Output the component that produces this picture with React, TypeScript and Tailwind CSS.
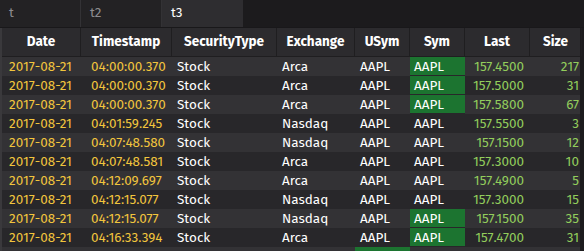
const cols = [
  { name: "Date", w: "w-[79px]" },
  { name: "Timestamp", w: "w-[91px]" },
  { name: "SecurityType", w: "w-[105px]" },
  { name: "Exchange", w: "w-[78px]" },
  { name: "USym", w: "w-[55px]" },
  { name: "Sym", w: "w-[55px]" },
  { name: "Last", w: "w-[65px]" },
  { name: "Size", w: "w-[52px]" },
];

const rows = [
  ["04:00:00.370", "Arca", true, "157.4500", "217"],
  ["04:00:00.370", "Arca", true, "157.5000", "31"],
  ["04:00:00.370", "Arca", true, "157.5800", "67"],
  ["04:01:59.245", "Nasdaq", false, "157.5500", "3"],
  ["04:07:48.580", "Nasdaq", false, "157.1500", "12"],
  ["04:07:48.581", "Arca", false, "157.3000", "10"],
  ["04:12:09.697", "Arca", false, "157.4900", "5"],
  ["04:12:15.077", "Nasdaq", false, "157.3000", "15"],
  ["04:12:15.077", "Nasdaq", true, "157.1500", "35"],
  ["04:16:33.394", "Arca", true, "157.4700", "31"],
] as const;

const App = () => {
  return (
    <div
      className="w-[584px] h-[251px] overflow-hidden bg-[#1c1b1d] text-[13.5px] text-white"
      style={{ fontFamily: '"Fira Sans", "Noto Sans", sans-serif' }}
    >
      <div className="flex h-[28px] border-b border-[#19181a]">
        <div className="w-[81px] pl-[9px] flex items-center text-[#8d8c8f] bg-[#232224] border-r border-[#333235]">
          t
        </div>
        <div className="w-[81px] pl-[9px] flex items-center text-[#8d8c8f] bg-[#232224] border-r border-[#333235]">
          t2
        </div>
        <div className="w-[81px] pl-[9px] flex items-center text-white bg-[#2e2d30]">
          t3
        </div>
      </div>
      <div className="w-[580px] border-l-2 border-[#3a393c]">
        <div className="flex h-[29px] bg-[#2c2b2e] border-b border-[#1f1e20]">
          {cols.map((c) => (
            <div
              key={c.name}
              className={`${c.w} shrink-0 flex items-center justify-center font-bold border-r border-[#1f1e20]`}
            >
              {c.name}
            </div>
          ))}
        </div>
        {rows.map((r, i) => (
          <div
            key={i}
            className={`flex h-[19px] leading-[19px] ${i % 2 === 0 ? "bg-[#333235]" : "bg-[#28272a]"}`}
          >
            <div className="w-[79px] shrink-0 pl-[7px] text-[#f2c53d]">2017-08-21</div>
            <div className="w-[91px] shrink-0 pl-[10px] text-[#f2c53d]">{r[0]}</div>
            <div className="w-[105px] shrink-0 pl-[5px]">Stock</div>
            <div className="w-[78px] shrink-0 pl-[5px]">{r[1]}</div>
            <div className="w-[55px] shrink-0 pl-[5px]">AAPL</div>
            <div
              className={`w-[55px] shrink-0 pl-[4px] ${r[2] ? "bg-[#1c7430] border-b border-[#28272a]" : ""}`}
            >
              AAPL
            </div>
            <div className="w-[65px] shrink-0 pr-[6px] text-right text-[#92cd5c]">{r[3]}</div>
            <div className="w-[52px] shrink-0 pr-[3px] text-right text-[#92cd5c]">{r[4]}</div>
          </div>
        ))}
        <div className="flex h-[19px] bg-[#333235]">
          <div className="w-[353px] shrink-0" />
          <div className="w-[55px] shrink-0 bg-[#1c7430]" />
        </div>
      </div>
    </div>
  );
};

export default App;
